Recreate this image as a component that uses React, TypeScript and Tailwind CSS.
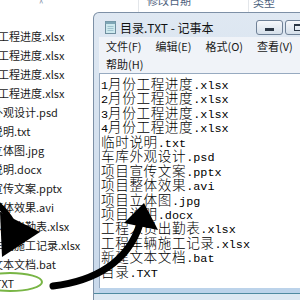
import React from "react";

const explorerFiles = [
  "1月份工程进度.xlsx",
  "2月份工程进度.xlsx",
  "3月份工程进度.xlsx",
  "4月份工程进度.xlsx",
  "车库外观设计.psd",
  "临时说明.txt",
  "项目立体图.jpg",
  "项目说明.docx",
  "项目宣传文案.pptx",
  "项目整体效果.avi",
  "工程人员出勤表.xlsx",
  "工程车辆施工记录.xlsx",
  "新建文本文档.bat",
  "目录.TXT",
];

const noteLines = [
  "1月份工程进度.xlsx",
  "2月份工程进度.xlsx",
  "3月份工程进度.xlsx",
  "4月份工程进度.xlsx",
  "临时说明.txt",
  "车库外观设计.psd",
  "项目宣传文案.pptx",
  "项目整体效果.avi",
  "项目立体图.jpg",
  "项目说明.docx",
  "工程人员出勤表.xlsx",
  "工程车辆施工记录.xlsx",
  "新建文本文档.bat",
  "目录.TXT",
];

const menuItems = ["文件(F)", "编辑(E)", "格式(O)", "查看(V)"];

// split a line into runs of wide (CJK) and narrow characters
function splitRuns(s: string) {
  const runs: { text: string; wide: boolean }[] = [];
  for (const ch of s) {
    const wide = /[\u3000-\u9fff\uff00-\uffef]/.test(ch);
    const last = runs[runs.length - 1];
    if (last && last.wide === wide) last.text += ch;
    else runs.push({ text: ch, wide });
  }
  return runs;
}

function NotepadIcon() {
  return (
    <svg width="13" height="14" viewBox="0 0 13 14">
      <rect x="1.5" y="1.5" width="10" height="12" fill="#cde9ee" stroke="#6f8f9f" />
      <rect x="1.5" y="1.5" width="10" height="2.5" fill="#7ea6b6" />
      <line x1="3.5" y1="6.5" x2="9.5" y2="6.5" stroke="#9fc3cf" />
      <line x1="3.5" y1="8.5" x2="9.5" y2="8.5" stroke="#9fc3cf" />
      <line x1="3.5" y1="10.5" x2="9.5" y2="10.5" stroke="#9fc3cf" />
    </svg>
  );
}

function Notepad() {
  return (
    <div className="absolute left-[93px] top-[12px] w-[230px] h-[288px] rounded-t-[6px] border-x border-t border-[#7d90a6] bg-gradient-to-b from-[#dfe8f2] to-[#c8d8ea] flex flex-col">
      {/* title bar */}
      <div className="h-[24px] flex items-start pt-[7px] pl-[10px] gap-[3px] shrink-0">
        <NotepadIcon />
        <span className="text-[12px] text-[#111] leading-none mt-[2px]">目录.TXT - 记事本</span>
      </div>
      <div className="absolute left-[162px] top-[7px] w-[27px] h-[15px] rounded-[3px] border border-[#6f8197] bg-gradient-to-b from-[#f6f8fb] to-[#d5dfea] flex items-center justify-center">
        <div className="w-[9px] h-[3px] bg-[#2b3644] mt-[3px]" />
      </div>
      <div className="absolute left-[191px] top-[7px] w-[27px] h-[15px] rounded-[3px] border border-[#6f8197] bg-gradient-to-b from-[#f6f8fb] to-[#d5dfea] flex items-center justify-center">
        <div className="w-[9px] h-[7px] border border-[#2b3644] border-t-2" />
      </div>

      {/* client area */}
      <div className="ml-[5px] flex-1 flex flex-col min-h-0">
        <div className="bg-[#f0f3f8] shrink-0">
          <div className="flex h-[18px] items-center text-[11px] text-[#1a1a1a]">
            {menuItems.map((m) => (
              <span key={m} className="px-[7px] whitespace-nowrap">{m}</span>
            ))}
          </div>
          <div className="flex h-[18px] items-center text-[11px] text-[#1a1a1a]">
            <span className="px-[7px]">帮助(H)</span>
          </div>
        </div>
        <div className="flex-1 bg-white border-l border-t border-[#97aac0] pt-[1px] pl-[1px] leading-[14.45px] text-black overflow-hidden">
          {noteLines.map((line, i) => (
            <div key={i} className="whitespace-nowrap h-[14.45px]">
              {splitRuns(line).map((r, j) =>
                r.wide ? (
                  <span key={j} className="text-[13.6px] tracking-[0.6px] font-light font-['Noto_Sans_CJK_SC',sans-serif]">{r.text}</span>
                ) : (
                  <span key={j} className="text-[11.8px] font-['Liberation_Mono','Noto_Sans_CJK_SC',monospace]">{r.text}</span>
                )
              )}
            </div>
          ))}
        </div>
        <div className="h-[5px] bg-[#bcd3ea] shrink-0" />
      </div>
      <div className="h-[1px] bg-[#4f8aa0] shrink-0" />
      <div className="h-[6px] bg-[#dde8f2] shrink-0" />
    </div>
  );
}

function Arrows() {
  return (
    <svg className="absolute inset-0 pointer-events-none" width="300" height="300" viewBox="0 0 300 300">
      {/* left arrow pointing at the file */}
      <path d="M-10 198 Q 4 208 12 222" stroke="#000" strokeWidth="6" fill="none" />
      <polygon points="0,212 40,232 2,257" fill="#000" />
      {/* curved arrow into the notepad text */}
      <path
        d="M53 286 C 95 281, 128 262, 140 224"
        stroke="#000"
        strokeWidth="7"
        strokeLinecap="round"
        fill="none"
      />
      <polygon points="144,203 124,223 158,230" fill="#000" />
      {/* green ring round the TXT file */}
      <ellipse cx="10" cy="282" rx="32" ry="9" stroke="#78b545" strokeWidth="2" fill="none" />
    </svg>
  );
}

export default function App() {
  return (
    <div className="relative w-[300px] h-[300px] overflow-hidden bg-white font-['Noto_Sans_CJK_SC','Noto_Sans',sans-serif]">
      {/* explorer column header */}
      <div className="flex h-[12px] overflow-hidden text-[11px] text-[#4c607c] leading-none">
        <div className="w-[139px] border-r border-[#e3e6ea] relative">
          <span className="absolute left-[39px] top-[-1px] text-[8px] text-[#7d8fa5]">^</span>
        </div>
        <div className="w-[110px] border-r border-[#e3e6ea] pl-[8px] -mt-[5px]">修改日期</div>
        <div className="pl-[4px] -mt-[3px]">类型</div>
      </div>

      {/* explorer file list */}
      <div className="mt-[15px] text-[11px] text-[#1b1b1b]">
        {explorerFiles.map((f) => (
          <div key={f} className="h-[19px] leading-[19px] whitespace-nowrap -ml-[30px]">
            {f}
          </div>
        ))}
      </div>

      <Notepad />
      <Arrows />
    </div>
  );
}
